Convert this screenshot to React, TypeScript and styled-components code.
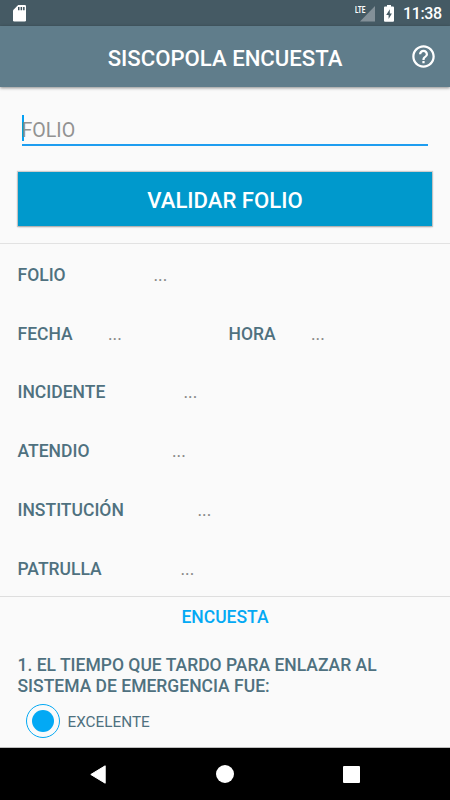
import React from "react";
import styled, { createGlobalStyle } from "styled-components";

const GlobalStyle = createGlobalStyle`
  * { box-sizing: border-box; }
  body { margin: 0; background: #fafafa; font-family: Roboto, sans-serif; overflow: hidden; }
`;

const Screen = styled.div`
  width: 450px;
  height: 800px;
  display: flex;
  flex-direction: column;
  background: #fafafa;
  overflow: hidden;
`;

const StatusBar = styled.div`
  height: 26px;
  flex: none;
  display: flex;
  align-items: center;
  padding: 0 9px 0 13px;
  background: #455a64;
  color: #fff;
`;

const StatusIcons = styled.div`
  margin-left: auto;
  display: flex;
  align-items: center;
`;

const Network = styled.div`
  display: flex;
  align-items: flex-start;
  height: 17px;
  margin-right: 9px;
`;

const NetworkLabel = styled.span`
  width: 11px;
  margin-right: -6px;
  font-size: 9.5px;
  line-height: 10px;
  font-weight: 700;
  transform: scaleX(0.68);
  transform-origin: left;
`;

const Clock = styled.span`
  margin-left: 9px;
  font-size: 16px;
  line-height: 26px;
  font-weight: 500;
  width: 38px;
  white-space: nowrap;
  letter-spacing: -0.35px;
  padding-top: 1px;
`;

const AppBar = styled.header`
  height: 61px;
  flex: none;
  display: grid;
  grid-template-columns: 1fr auto 1fr;
  align-items: center;
  padding-right: 13px;
  background: #607d8b;
  color: #fff;
  box-shadow: 0 1px 3px rgba(0, 0, 0, 0.45);
`;

const Title = styled.h1`
  grid-column: 2;
  margin: 3px -13px 0 0;
  font-size: 22.15px;
  line-height: 26px;
  font-weight: 500;
`;

const HelpButton = styled.button`
  justify-self: end;
  display: flex;
  padding: 0;
  border: 0;
  background: none;
  color: #fff;
`;

const Form = styled.form`
  height: 156px;
  flex: none;
  padding: 28px 18px 0;
`;

const Field = styled.div`
  height: 31px;
  margin: 0 4px 26px;
  display: flex;
  align-items: flex-start;
  border-bottom: 2px solid #1e9df0;
`;

const Caret = styled.span`
  width: 2px;
  height: 26px;
  margin-right: -2px;
  background: #03a0f4;
`;

const Placeholder = styled.span`
  font-size: 19.6px;
  line-height: 28px;
  margin: 2px 0 0 -0.5px;
  color: #929292;
`;

const Submit = styled.button`
  display: block;
  width: 414px;
  height: 54px;
  padding: 2px 0 0;
  border: 0;
  background: #0099cc;
  color: #fff;
  font: 500 22.1px/26px Roboto, sans-serif;
  box-shadow: 0 0 1px 1px rgba(0, 0, 0, 0.17), 0 1px 2px rgba(0, 0, 0, 0.2);
`;

const Details = styled.dl`
  margin: 0;
  height: 354px;
  flex: none;
  display: grid;
  grid-template-rows: repeat(6, 58.8px);
  padding: 2px 17.5px 0;
  border-top: 1px solid #e2e2e2;
  border-bottom: 1px solid #dedede;
`;

const DetailRow = styled.div`
  display: flex;
  align-items: center;
`;

const Label = styled.dt<{ $width: number }>`
  width: ${(p) => p.$width}px;
  flex: none;
  font-size: 17.5px;
  line-height: 21px;
  font-weight: 500;
  color: #4f717f;
`;

const Value = styled.dd<{ $width?: number }>`
  width: ${(p) => (p.$width ? `${p.$width}px` : "auto")};
  margin: 0;
  font-size: 17.5px;
  line-height: 21px;
  color: #888;
`;

const Survey = styled.section`
  flex: 1;
  padding: 10px 17.5px 0;
  border-bottom: 1px solid #bdbdbd;
`;

const SurveyTitle = styled.h2`
  margin: 0;
  text-align: center;
  font-size: 17.5px;
  line-height: 21px;
  font-weight: 500;
  color: #03a9f4;
`;

const Question = styled.p`
  margin: 27px 0 0;
  font-size: 17.5px;
  line-height: 20.5px;
  font-weight: 500;
  color: #4f717f;
`;

const Option = styled.label`
  display: flex;
  align-items: center;
  gap: 8px;
  margin: 8px 0 0 8px;
  font-size: 15.3px;
  line-height: 20px;
  color: #4f717f;
`;

const OptionText = styled.span`
  padding-top: 1px;
`;

const Radio = styled.span`
  width: 34px;
  height: 34px;
  display: grid;
  place-items: center;
  border: 1px solid #03a9f4;
  border-radius: 50%;

  &::after {
    content: "";
    width: 22px;
    height: 22px;
    border-radius: 50%;
    background: #03a9f4;
  }
`;

const NavBar = styled.nav`
  height: 52px;
  flex: none;
  display: flex;
  justify-content: space-between;
  align-items: center;
  padding: 0 90px;
  background: #000;
`;

const rows = [
  [{ label: "FOLIO", width: 136 }],
  [
    { label: "FECHA", width: 90.5, value: 120.5 },
    { label: "HORA", width: 82.5 },
  ],
  [{ label: "INCIDENTE", width: 166 }],
  [{ label: "ATENDIO", width: 154.5 }],
  [{ label: "INSTITUCIÓN", width: 180 }],
  [{ label: "PATRULLA", width: 163 }],
];

const SdCard = () => (
  <svg width="13" height="17" viewBox="0 0 13 17">
    <path d="M5.2 0H11.7Q13 0 13 1.3V15.2Q13 16.5 11.7 16.5H1.3Q0 16.5 0 15.2V5.2Z" fill="#fff" />
    <path d="M5 2h1.5v3.2H5zM7.6 2h1.5v3.2H7.6zM10.1 2h1.5v3.2h-1.5z" fill="#3c515b" />
  </svg>
);

const Signal = () => (
  <svg width="15" height="17" viewBox="0 0 15 17">
    <path d="M15 1V16.5H0Z" fill="#839098" />
  </svg>
);

const Battery = () => (
  <svg width="10" height="17" viewBox="0 0 10 17">
    <path d="M3 0h4v1.6h2Q10 1.6 10 2.6V15.7Q10 16.7 9 16.7H1Q0 16.7 0 15.7V2.6Q0 1.6 1 1.6h2Z" fill="#fff" />
    <path d="M5.8 4.2 2.2 9.9h2.4v4L7.9 8.4H5.8Z" fill="#455a64" />
  </svg>
);

const Help = () => (
  <svg width="27" height="27" viewBox="0 0 24 24" fill="currentColor">
    <path d="M11 18h2v-2h-2v2zm1-16C6.48 2 2 6.48 2 12s4.48 10 10 10 10-4.48 10-10S17.52 2 12 2zm0 18c-4.41 0-8-3.59-8-8s3.59-8 8-8 8 3.59 8 8-3.59 8-8 8zm0-14c-2.21 0-4 1.79-4 4h2c0-1.1.9-2 2-2s2 .9 2 2c0 2-3 1.75-3 5h2c0-2.25 3-2.5 3-5 0-2.21-1.79-4-4-4z" />
  </svg>
);

export default function App() {
  return (
    <>
      <GlobalStyle />
      <Screen>
        <StatusBar>
          <SdCard />
          <StatusIcons>
            <Network>
              <NetworkLabel>LTE</NetworkLabel>
              <Signal />
            </Network>
            <Battery />
            <Clock>11:38</Clock>
          </StatusIcons>
        </StatusBar>
        <AppBar>
          <Title>SISCOPOLA ENCUESTA</Title>
          <HelpButton aria-label="Ayuda"><Help /></HelpButton>
        </AppBar>
        <Form>
          <Field>
            <Caret />
            <Placeholder>FOLIO</Placeholder>
          </Field>
          <Submit type="button">VALIDAR FOLIO</Submit>
        </Form>
        <Details>
          {rows.map((row) => (
            <DetailRow key={row[0].label}>
              {row.map((item) => (
                <React.Fragment key={item.label}>
                  <Label $width={item.width}>{item.label}</Label>
                  <Value $width={item.value}>...</Value>
                </React.Fragment>
              ))}
            </DetailRow>
          ))}
        </Details>
        <Survey>
          <SurveyTitle>ENCUESTA</SurveyTitle>
          <Question>1. EL TIEMPO QUE TARDO PARA ENLAZAR AL SISTEMA DE EMERGENCIA FUE:</Question>
          <Option>
            <Radio role="radio" aria-checked="true" />
            <OptionText>EXCELENTE</OptionText>
          </Option>
        </Survey>
        <NavBar>
          <svg width="16" height="19" viewBox="0 0 16 19"><path d="M15.2.8v17.4L.8 9.5Z" fill="#fff" stroke="#fff" strokeWidth="1" strokeLinejoin="round" /></svg>
          <svg width="18" height="18" viewBox="0 0 18 18"><circle cx="9" cy="9" r="9" fill="#fff" /></svg>
          <svg width="17" height="17" viewBox="0 0 17 17"><rect width="17" height="17" rx="1" fill="#fff" /></svg>
        </NavBar>
      </Screen>
    </>
  );
}
